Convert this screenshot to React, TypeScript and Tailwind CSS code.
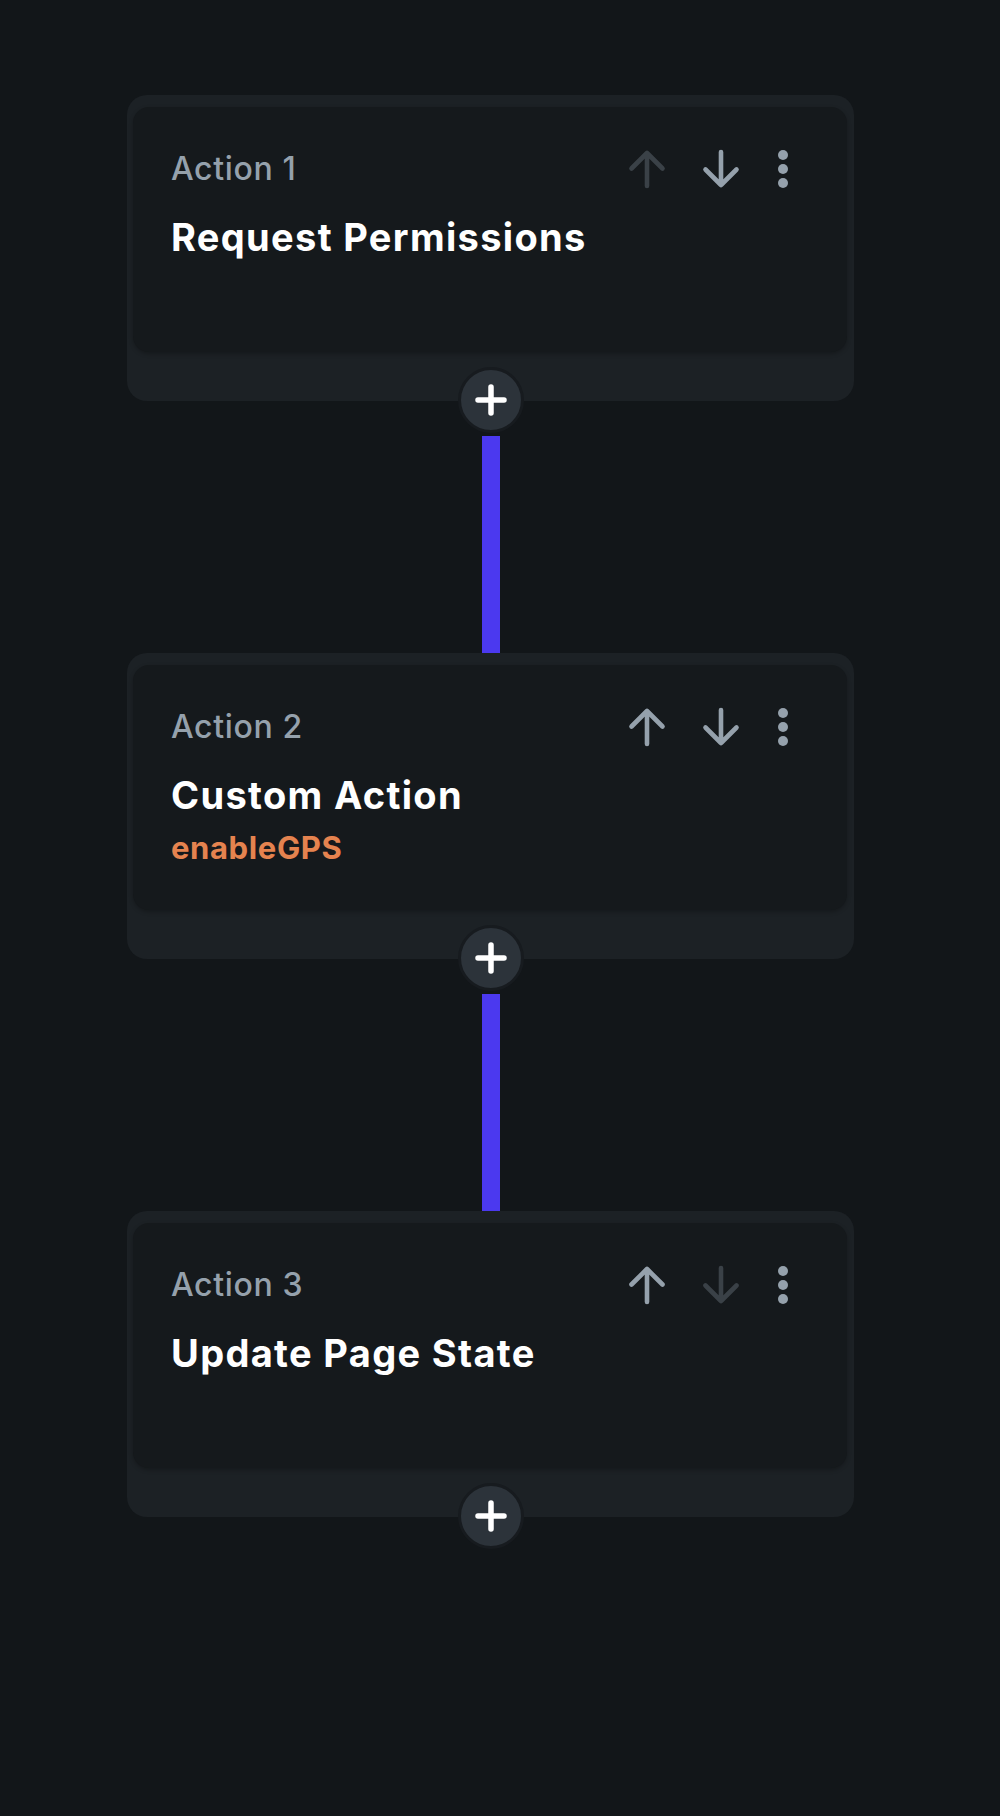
import React from "react";

type Action = {
  label: string;
  title: string;
  subtitle?: string;
  canUp: boolean;
  canDown: boolean;
};

const actions: Action[] = [
  { label: "Action 1", title: "Request Permissions", canUp: false, canDown: true },
  { label: "Action 2", title: "Custom Action", subtitle: "enableGPS", canUp: true, canDown: true },
  { label: "Action 3", title: "Update Page State", canUp: true, canDown: false },
];

function ArrowIcon({ dir, enabled }: { dir: "up" | "down"; enabled: boolean }) {
  const d = dir === "up" ? "M20 37V4M4.5 19.5 20 4l15.5 15.5" : "M20 3v33M4.5 20.5 20 36l15.5-15.5";
  return (
    <svg width="40" height="40" viewBox="0 0 40 40" fill="none">
      <path
        d={d}
        stroke={enabled ? "#95a1ac" : "#3a4147"}
        strokeWidth="4.6"
        strokeLinecap="round"
        strokeLinejoin="round"
      />
    </svg>
  );
}

function MoreIcon() {
  return (
    <svg width="20" height="40" viewBox="0 0 20 40" fill="#95a1ac">
      <circle cx="10" cy="6" r="5" />
      <circle cx="10" cy="20" r="5" />
      <circle cx="10" cy="34" r="5" />
    </svg>
  );
}

function AddButton() {
  return (
    <div className="relative z-10 -mt-[34px] flex h-[66px] w-[66px] items-center justify-center rounded-full border-[3px] border-[#171b1f] bg-[#2c333a]">
      <svg width="32" height="32" viewBox="0 0 32 32" fill="none">
        <path d="M16 3v26M3 16h26" stroke="#ffffff" strokeWidth="5.5" strokeLinecap="round" />
      </svg>
    </div>
  );
}

function ActionCard({ action }: { action: Action }) {
  return (
    <div className="h-[306px] w-[727px] rounded-[20px] bg-[#1c2125] pt-[12px] pl-[6px] pr-[7px]">
      <div className="flex h-[245px] flex-col rounded-[16px] bg-[#15191c] pt-[42px] pl-[38px] pr-[54px] shadow-[0_2px_4px_rgba(0,0,0,0.25)]">
        {/* header */}
        <div className="flex h-[40px] items-center justify-between">
          <span className="text-[32px] leading-[40px] font-medium tracking-[0.02em] text-[#95a1ac]">
            {action.label}
          </span>
          <div className="flex items-center">
            <ArrowIcon dir="up" enabled={action.canUp} />
            <div className="ml-[34px]">
              <ArrowIcon dir="down" enabled={action.canDown} />
            </div>
            <div className="ml-[32px]">
              <MoreIcon />
            </div>
          </div>
        </div>
        <p className="mt-[26px] text-[38px] leading-[44px] font-bold tracking-[0.035em] text-white">
          {action.title}
        </p>
        {action.subtitle && (
          <p className="mt-[13px] text-[31px] leading-[36px] font-bold tracking-[0.02em] text-[#e5834f]">
            {action.subtitle}
          </p>
        )}
      </div>
    </div>
  );
}

export default function App() {
  return (
    <div
      className="min-h-[1816px] w-full bg-[#121619] pt-[95px] pl-[127px]"
      style={{ fontFamily: "Inter, 'Noto Sans', sans-serif" }}
    >
      <div className="flex w-[727px] flex-col items-center">
        {actions.map((a, i) => (
          <React.Fragment key={i}>
            <ActionCard action={a} />
            <AddButton />
            {i < actions.length - 1 && <div className="mt-[3px] h-[217px] w-[18px] bg-[#4b39ef]" />}
          </React.Fragment>
        ))}
      </div>
    </div>
  );
}
